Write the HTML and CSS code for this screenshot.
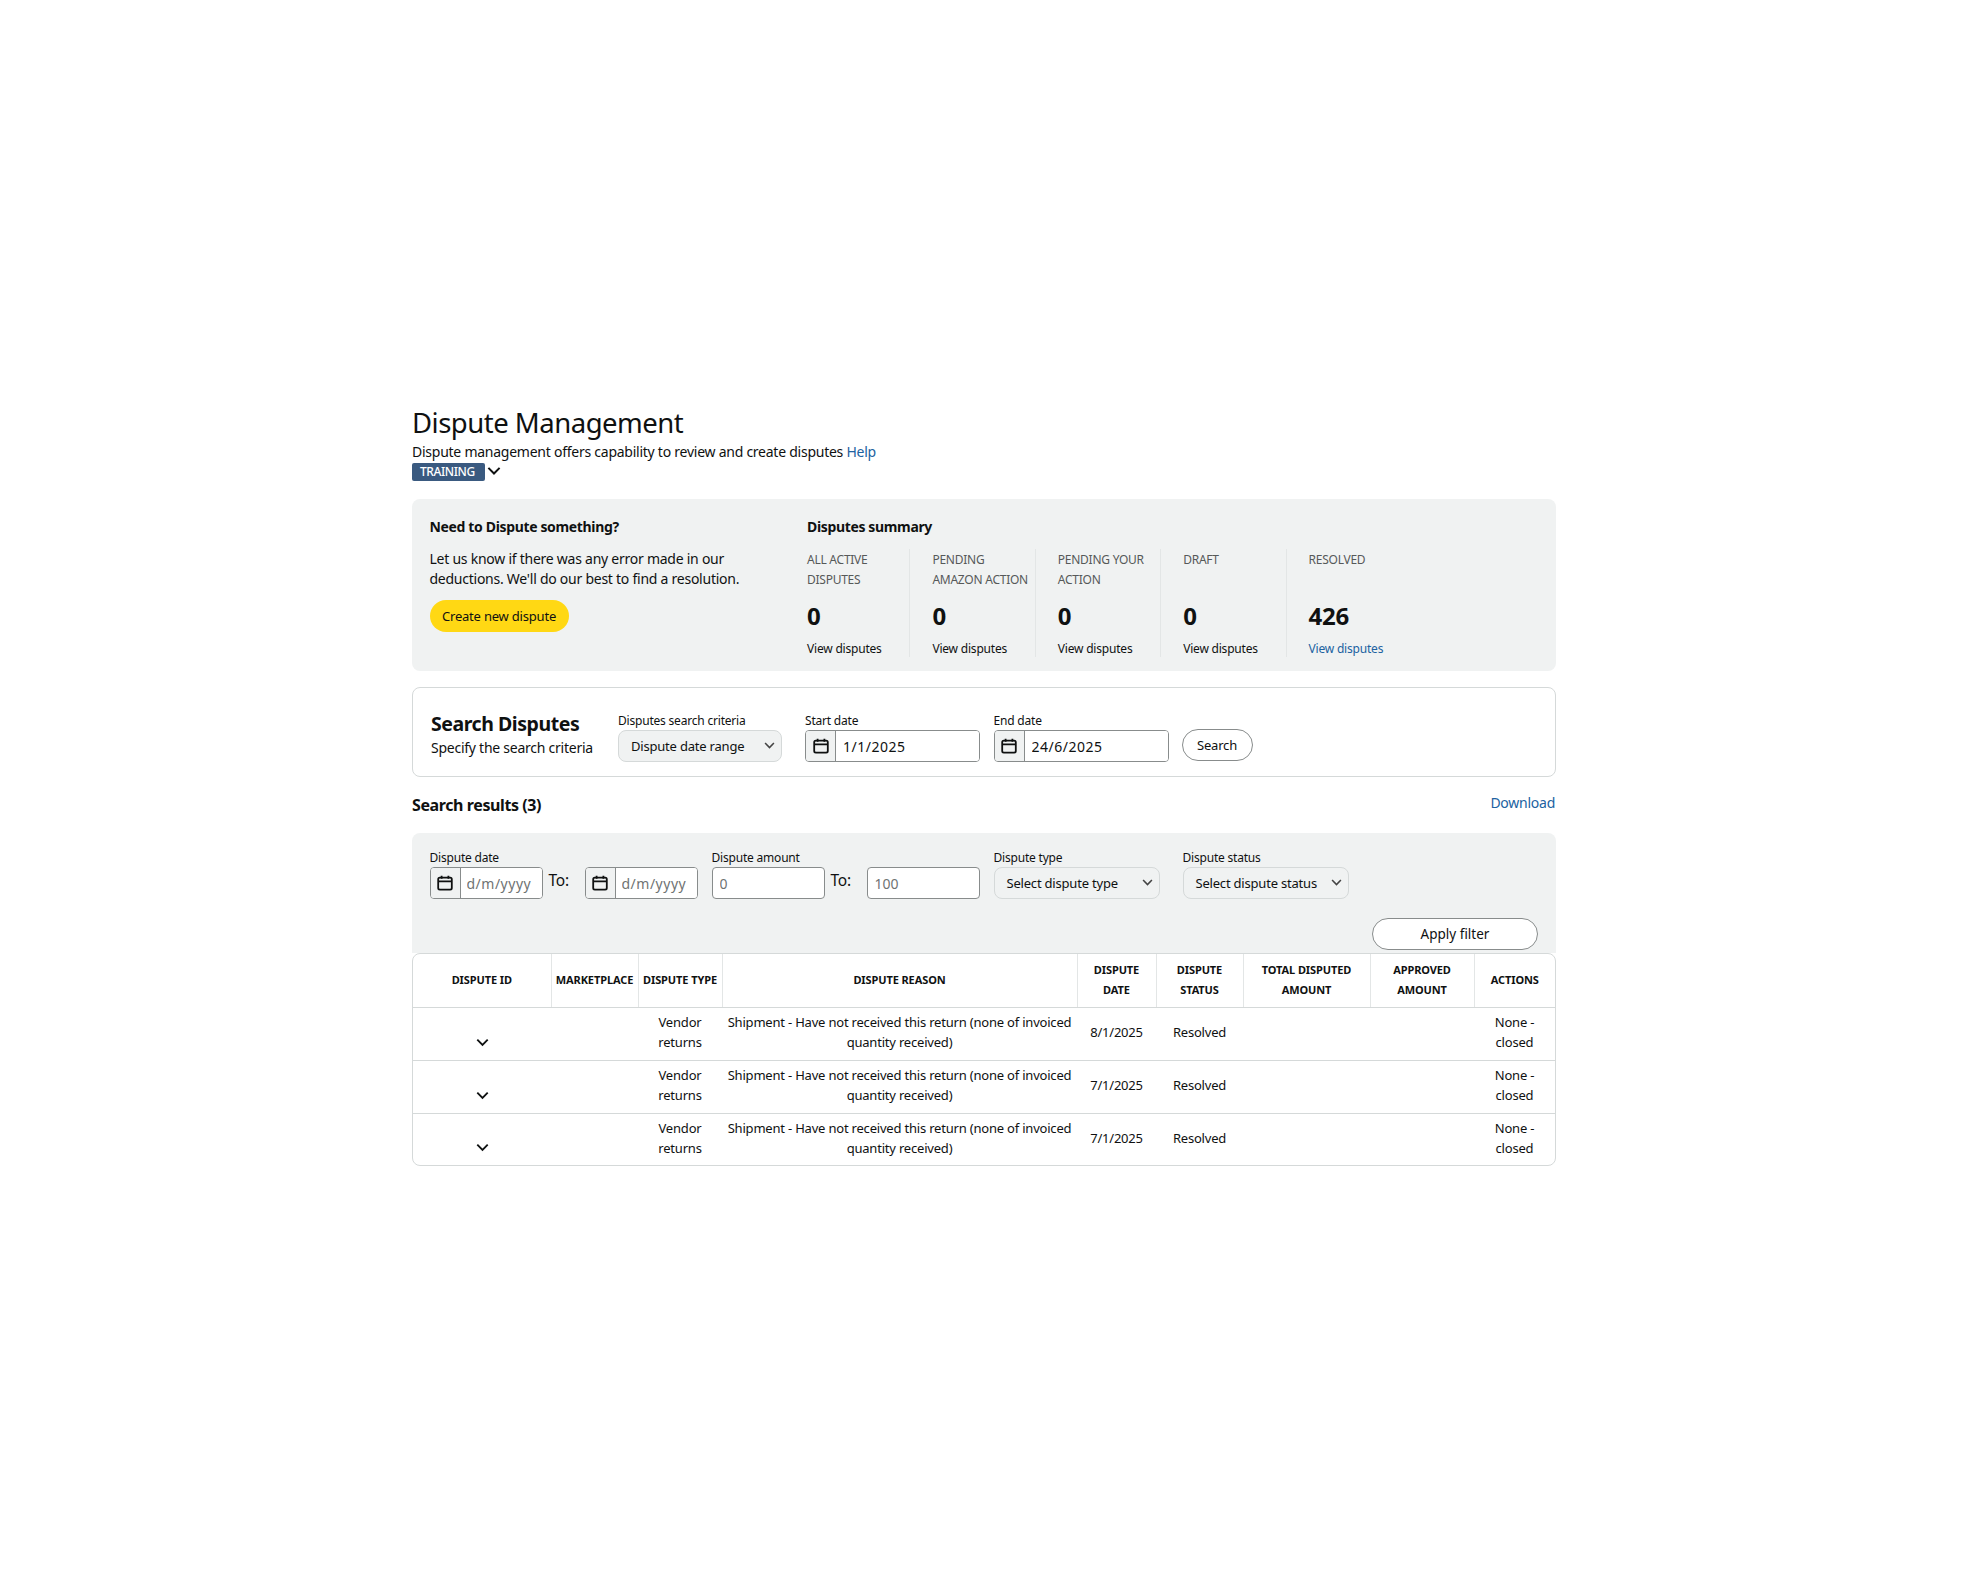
FILE: index.html
```html
<!DOCTYPE html>
<html lang="en">
<head>
<meta charset="utf-8">
<title>Dispute Management</title>
<link rel="stylesheet" href="styles.css">
</head>
<body>
<svg class="defs" width="0" height="0" aria-hidden="true">
  <symbol id="cal" viewBox="0 0 16 16"><rect x="1.2" y="2.7" width="13.6" height="12" rx="1.6" fill="none" stroke="#0f1111" stroke-width="1.8"/><path d="M1.2 6.3h13.6" stroke="#0f1111" stroke-width="1.8"/><path d="M4.6 .8v3M11.4 .8v3" stroke="#0f1111" stroke-width="1.8"/></symbol>
  <symbol id="chev" viewBox="0 0 12 8"><path d="M1.2 1.3 6 6.2l4.8-4.9" fill="none" stroke="currentColor" stroke-width="1.7"/></symbol>
</svg>
<main class="page">
  <h1 class="title">Dispute Management</h1>
  <p class="subtitle">Dispute management offers capability to review and create disputes <a class="link" href="#">Help</a></p>
  <div class="badge-row"><span class="badge">TRAINING</span><svg class="badge-chev"><use href="#chev"/></svg></div>

  <section class="summary">
    <div class="need">
      <h2 class="h-small">Need to Dispute something?</h2>
      <p class="need-text">Let us know if there was any error made in our deductions. We'll do our best to find a resolution.</p>
      <button class="btn-primary">Create new dispute</button>
    </div>
    <div class="stats">
      <h2 class="h-small">Disputes summary</h2>
      <div class="stat-row">
        <div class="stat"><div class="stat-label">ALL ACTIVE DISPUTES</div><div class="stat-num">0</div><div class="stat-link">View disputes</div></div>
        <div class="stat"><div class="stat-label">PENDING AMAZON ACTION</div><div class="stat-num">0</div><div class="stat-link">View disputes</div></div>
        <div class="stat"><div class="stat-label">PENDING YOUR ACTION</div><div class="stat-num">0</div><div class="stat-link">View disputes</div></div>
        <div class="stat"><div class="stat-label">DRAFT</div><div class="stat-num">0</div><div class="stat-link">View disputes</div></div>
        <div class="stat"><div class="stat-label">RESOLVED</div><div class="stat-num">426</div><a class="stat-link link" href="#">View disputes</a></div>
      </div>
    </div>
  </section>

  <section class="search">
    <div class="search-head">
      <h2 class="search-title">Search Disputes</h2>
      <p class="search-sub">Specify the search criteria</p>
    </div>
    <div class="field w-criteria">
      <label class="lbl">Disputes search criteria</label>
      <div class="select">Dispute date range<svg class="sel-chev"><use href="#chev"/></svg></div>
    </div>
    <div class="field w-date">
      <label class="lbl">Start date</label>
      <div class="date"><span class="date-ic"><svg class="cal"><use href="#cal"/></svg></span><input class="date-in" value="1/1/2025"></div>
    </div>
    <div class="field w-date">
      <label class="lbl">End date</label>
      <div class="date"><span class="date-ic"><svg class="cal"><use href="#cal"/></svg></span><input class="date-in" value="24/6/2025"></div>
    </div>
    <button class="btn search-btn">Search</button>
  </section>

  <div class="results-head">
    <h2 class="results-title">Search results (3)</h2>
    <a class="link download" href="#">Download</a>
  </div>

  <section class="filter">
    <div class="filter-row">
      <div class="field w-fdate">
        <label class="lbl">Dispute date</label>
        <div class="date"><span class="date-ic"><svg class="cal"><use href="#cal"/></svg></span><input class="date-in ph" placeholder="d/m/yyyy"></div>
      </div>
      <span class="to">To:</span>
      <div class="field w-fdate no-lbl">
        <div class="date"><span class="date-ic"><svg class="cal"><use href="#cal"/></svg></span><input class="date-in ph" placeholder="d/m/yyyy"></div>
      </div>
      <div class="field w-amt gap-l">
        <label class="lbl">Dispute amount</label>
        <input class="num" placeholder="0">
      </div>
      <span class="to">To:</span>
      <div class="field w-amt no-lbl">
        <input class="num" placeholder="100">
      </div>
      <div class="field w-type gap-m">
        <label class="lbl">Dispute type</label>
        <div class="select">Select dispute type<svg class="sel-chev"><use href="#chev"/></svg></div>
      </div>
      <div class="field w-status gap-n">
        <label class="lbl">Dispute status</label>
        <div class="select">Select dispute status<svg class="sel-chev"><use href="#chev"/></svg></div>
      </div>
    </div>
    <div class="apply-row"><button class="btn apply">Apply filter</button></div>
  </section>

  <div class="table-wrap">
    <table class="tbl">
      <colgroup>
        <col class="c1"><col class="c2"><col class="c3"><col class="c4"><col class="c5"><col class="c6"><col class="c7"><col class="c8"><col class="c9">
      </colgroup>
      <thead>
        <tr><th>DISPUTE ID</th><th>MARKETPLACE</th><th>DISPUTE TYPE</th><th>DISPUTE REASON</th><th>DISPUTE DATE</th><th>DISPUTE STATUS</th><th>TOTAL DISPUTED AMOUNT</th><th>APPROVED AMOUNT</th><th>ACTIONS</th></tr>
      </thead>
      <tbody>
        <tr><td class="chev-cell"><svg class="row-chev"><use href="#chev"/></svg></td><td></td><td>Vendor returns</td><td>Shipment - Have not received this return (none of invoiced quantity received)</td><td>8/1/2025</td><td>Resolved</td><td></td><td></td><td>None - closed</td></tr>
        <tr><td class="chev-cell"><svg class="row-chev"><use href="#chev"/></svg></td><td></td><td>Vendor returns</td><td>Shipment - Have not received this return (none of invoiced quantity received)</td><td>7/1/2025</td><td>Resolved</td><td></td><td></td><td>None - closed</td></tr>
        <tr><td class="chev-cell"><svg class="row-chev"><use href="#chev"/></svg></td><td></td><td>Vendor returns</td><td>Shipment - Have not received this return (none of invoiced quantity received)</td><td>7/1/2025</td><td>Resolved</td><td></td><td></td><td>None - closed</td></tr>
      </tbody>
    </table>
  </div>
</main>
</body>
</html>
```
FILE: styles.css
```css
* { box-sizing: border-box; }
html, body { margin: 0; padding: 0; background: #fff; }
body { font-family: "Noto Sans", "Open Sans", sans-serif; color: #0f1111; font-size: 14px; letter-spacing: -0.25px; height: 1587px; overflow: hidden; }
.defs { position: absolute; }
.page { width: 1144px; margin-left: 412px; padding-top: 404px; }
.link { color: #2162a1; text-decoration: none; }
.title { margin: 0; font-size: 27.5px; font-weight: 400; line-height: 38px; letter-spacing: -0.5px; }
.subtitle { margin: 0; line-height: 20px; height: 19px; }
.badge-row { display: flex; align-items: flex-start; height: 36px; margin-top: 2px; }
.badge { width: 73px; height: 18px; background: #3a5a80; color: #fff; border-radius: 2px; font-size: 12px; font-weight: 500; line-height: 18px; padding-left: 8px; letter-spacing: -0.4px; }
.badge-chev { width: 14px; height: 10px; margin-left: 2px; margin-top: 3px; color: #0f1111; }
.summary { display: flex; height: 172px; background: #f0f2f2; border-radius: 8px; padding: 18px 18px 14px 17.5px; }
.need { width: 377.5px; flex: none; }
.h-small { margin: 0; font-size: 14px; font-weight: 700; line-height: 20px; letter-spacing: -0.35px; }
.need-text { margin: 12px 0 0; width: 340px; line-height: 20px; }
.btn-primary { display: block; margin-top: 11px; width: 139px; height: 32px; border: 0; border-radius: 16px; background: #ffd814; color: #0f1111; font: inherit; font-size: 13px; letter-spacing: -0.2px; padding: 0; }
.stats { flex: 1; }
.stat-row { display: flex; margin-top: 12px; }
.stat { height: 108px; padding-right: 4px; border-right: 1px solid #e3e6e6; margin-right: 22px; flex: none; width: 103.4px; }
.stat:last-child { border-right: 0; }
.stat-label { font-size: 12px; line-height: 20px; color: #565959; height: 40px; margin-top: 1px; }
.stat-num { font-size: 24px; font-weight: 700; line-height: 32px; margin-top: 10px; letter-spacing: -0.2px; }
.stat-link { display: block; font-size: 12px; line-height: 16px; margin-top: 9px; letter-spacing: -0.2px; }
.search { display: flex; align-items: flex-start; height: 90px; margin-top: 16px; border: 1px solid #d5d9d9; border-radius: 8px; padding: 24px 0 0 18px; }
.search-head { width: 187px; flex: none; }
.search-title { margin: 0; font-size: 19.5px; font-weight: 700; line-height: 24px; letter-spacing: -0.45px; }
.search-sub { margin: 2px 0 0; line-height: 20px; }
.field { flex: none; }
.lbl { display: block; font-size: 12px; line-height: 16px; height: 17px; margin-top: 1px; letter-spacing: -0.2px; }
.select { position: relative; height: 32px; border: 1px solid #d5d9d9; border-radius: 8px; background: #f0f2f2; font-size: 13px; line-height: 30px; padding-left: 12px; letter-spacing: -0.2px; }
.sel-chev { position: absolute; right: 6px; top: 10px; width: 11px; height: 9px; color: #444; }
.date { display: flex; height: 32px; border: 1px solid #888c8c; border-radius: 4px; background: #fff; overflow: hidden; }
.date-ic { width: 30px; flex: none; background: #f0f2f2; border-right: 1px solid #888c8c; display: flex; align-items: center; justify-content: center; }
.cal { width: 16px; height: 16px; }
.date-in { width: 100%; min-width: 0; border: 0; outline: 0; font: inherit; font-size: 14px; letter-spacing: 0.5px; padding: 1px 0 0 7px; background: #fff; color: #0f1111; }
.num { display: block; width: 100%; height: 32px; border: 1px solid #888c8c; border-radius: 4px; font: inherit; letter-spacing: 0; padding: 1px 0 0 7px; background: #fff; outline: 0; }
input::placeholder { color: #6f7373; opacity: 1; }
.w-criteria { width: 164px; margin-right: 23px; }
.w-date { width: 175px; margin-right: 13.5px; }
.search-btn { width: 71px; height: 32px; margin-top: 17px; margin-left: -0.5px; letter-spacing: -0.2px; }
.btn { border: 1px solid #888c8c; border-radius: 16px; background: #fff; color: #0f1111; font: inherit; font-size: 13px; padding: 0; }
.results-head { display: flex; justify-content: space-between; align-items: flex-start; height: 56px; }
.results-title { margin: 17px 0 0; font-size: 16px; font-weight: 700; line-height: 22px; letter-spacing: -0.4px; }
.download { margin-top: 16px; line-height: 20px; margin-right: 1px; }
.filter { background: #f0f2f2; border-radius: 8px 8px 0 0; height: 120px; padding: 16px 18px 0 17.5px; }
.filter-row { display: flex; align-items: flex-start; }
.w-fdate { width: 113px; }
.w-fdate .date-in { padding-left: 6px; }
.w-amt { width: 113px; }
.no-lbl { padding-top: 18px; }
.to { width: 42px; flex: none; padding: 19px 0 0 6px; font-size: 15.5px; line-height: 24px; }
.gap-l { margin-left: 14px; }
.gap-m { margin-left: 14px; }
.gap-n { margin-left: 23px; }
.w-type { width: 166px; }
.w-status { width: 166px; }
.apply-row { display: flex; justify-content: flex-end; margin-top: 19px; }
.apply { width: 166px; height: 32px; font-size: 13.5px; }
.table-wrap { width: 1144px; border: 1px solid #d5d9d9; border-radius: 8px; overflow: hidden; background: #fff; }
.tbl { width: 100%; border-collapse: collapse; table-layout: fixed; }
.c1 { width: 138px; } .c2 { width: 87px; } .c3 { width: 84px; } .c4 { width: 355px; } .c5 { width: 79px; } .c6 { width: 87px; } .c7 { width: 127px; } .c8 { width: 104px; }
.tbl th { height: 53px; padding: 0 2px; font-size: 11px; line-height: 20px; font-weight: 700; text-align: center; border-right: 1px solid #e3e6e6; border-bottom: 1px solid #d5d9d9; letter-spacing: -0.1px; }
.tbl th:last-child { border-right: 0; }
.tbl td { height: 53px; padding: 0 4px 3px; font-size: 13px; line-height: 20px; text-align: center; border-bottom: 1px solid #d5d9d9; letter-spacing: -0.2px; }
.tbl tr:last-child td { border-bottom: 0; height: 52px; }
.tbl .chev-cell { vertical-align: bottom; padding-bottom: 13px; }
.row-chev { display: block; margin: 0 auto; width: 13px; height: 9px; color: #0f1111; }
```
